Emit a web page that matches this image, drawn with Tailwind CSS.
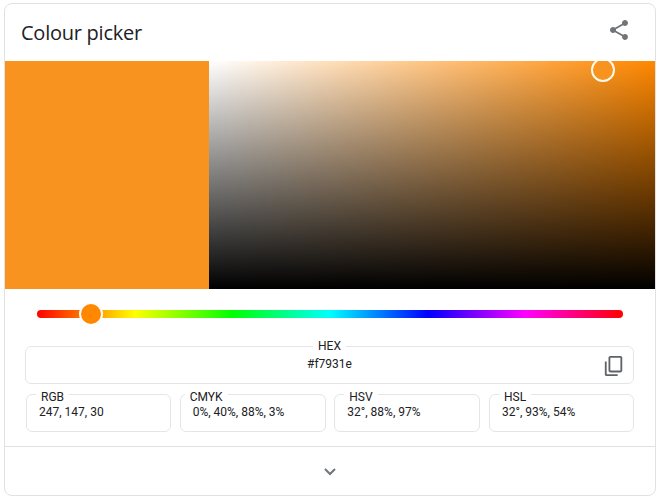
<!DOCTYPE html>
<html>
<head>
    <title>Colour picker</title>
    <script src="https://cdn.jsdelivr.net/npm/@tailwindcss/browser@4"></script>
</head>
<body class="bg-white font-['Roboto',sans-serif] text-[#202124]">
    <div class="w-[660px] h-[500px] pt-[3px] px-[4px]">
        <div class="w-[652px] h-[493px] bg-white border border-[#dfe1e5] rounded-lg overflow-hidden flex flex-col">
            <!-- header -->
            <div class="h-[57px] flex items-center justify-between pl-[16px] pr-[24px]">
                <h2 class="text-[20px] font-['Open_Sans',sans-serif] tracking-[-0.25px] text-[#202124]">Colour picker</h2>
                <svg class="w-[24px] h-[24px] -mt-[6px] fill-[#70757a]" viewBox="0 0 24 24"><path d="M18 16.08c-.76 0-1.44.3-1.96.77L8.91 12.7c.05-.23.09-.46.09-.7s-.04-.47-.09-.7l7.05-4.11c.54.5 1.25.81 2.04.81 1.66 0 3-1.34 3-3s-1.34-3-3-3-3 1.34-3 3c0 .24.04.47.09.7L8.04 9.81C7.5 9.31 6.79 9 6 9c-1.66 0-3 1.34-3 3s1.34 3 3 3c.79 0 1.5-.31 2.04-.81l7.12 4.16c-.05.21-.08.43-.08.65 0 1.61 1.31 2.92 2.92 2.92s2.92-1.31 2.92-2.92-1.31-2.92-2.92-2.92z"/></svg>
            </div>
            <!-- picker -->
            <div class="h-[228px] flex shrink-0">
                <div class="w-[204px] bg-[#f7931e]"></div>
                <div class="relative flex-1 overflow-hidden bg-[linear-gradient(to_top,#000,transparent),linear-gradient(to_right,#fff,#ff8800)]">
                    <div class="absolute left-[382px] top-[-3px] w-[24px] h-[24px] rounded-full bg-[#f7931e] border-2 border-[#fff8ec]"></div>
                </div>
            </div>
            <!-- hue slider -->
            <div class="relative h-[8px] mt-[21px] ml-[32px] w-[586px] rounded-full bg-[linear-gradient(to_right,#f00,#ff0,#0f0,#0ff,#00f,#f0f,#f00)] shrink-0">
                <div class="absolute left-[42px] top-[-8px] w-[24px] h-[24px] rounded-full bg-[#ff8800] border-2 border-white"></div>
            </div>
            <!-- values -->
            <div class="flex flex-col gap-[3px] mt-[21px] ml-[20px] w-[609px] text-[12px] leading-[14px]">
                <fieldset class="relative h-[45px] border border-[#e4e5e8] rounded-md text-center">
                    <legend class="mx-auto px-[5px] h-[14px]">HEX</legend>
                    <div class="mt-[4px]">#f7931e</div>
                    <svg class="absolute right-[8px] top-[2px] w-[22px] h-[22px] fill-[#5f6368]" viewBox="0 0 24 24"><path d="M16 1H4c-1.1 0-2 .9-2 2v14h2V3h12V1zm3 4H8c-1.1 0-2 .9-2 2v14c0 1.1.9 2 2 2h11c1.1 0 2-.9 2-2V7c0-1.1-.9-2-2-2zm0 16H8V7h11v14z" transform="matrix(1 0 0 -1 0 24)" /></svg>
                </fieldset>
                <div class="flex justify-between pl-[1px]">
                    <fieldset class="w-[145px] h-[45px] border border-[#e4e5e8] rounded-md">
                        <legend class="ml-[9px] px-[5px] h-[14px] leading-[21px]">RGB</legend>
                        <div class="mt-[4px] pl-[12px]">247, 147, 30</div>
                    </fieldset>
                    <fieldset class="w-[146px] h-[45px] border border-[#e4e5e8] rounded-md">
                        <legend class="ml-[4px] px-[5px] h-[14px] leading-[21px]">CMYK</legend>
                        <div class="mt-[4px] pl-[12px]">0%, 40%, 88%, 3%</div>
                    </fieldset>
                    <fieldset class="w-[146px] h-[45px] border border-[#e4e5e8] rounded-md">
                        <legend class="ml-[9px] px-[5px] h-[14px] leading-[21px]">HSV</legend>
                        <div class="mt-[4px] pl-[12px]">32°, 88%, 97%</div>
                    </fieldset>
                    <fieldset class="w-[145px] h-[45px] border border-[#e4e5e8] rounded-md">
                        <legend class="ml-[9px] px-[5px] h-[14px] leading-[21px]">HSL</legend>
                        <div class="mt-[4px] pl-[12px]">32°, 93%, 54%</div>
                    </fieldset>
                </div>
            </div>
            <!-- expand -->
            <div class="mt-[14px] flex-1 border-t border-[#dfe1e5] flex items-center justify-center">
                <svg class="w-[20px] h-[20px] fill-none stroke-[#70757a] stroke-2" viewBox="0 0 20 20"><path d="M5 8l5 5 5-5"/></svg>
            </div>
        </div>
    </div>
</body>
</html>
